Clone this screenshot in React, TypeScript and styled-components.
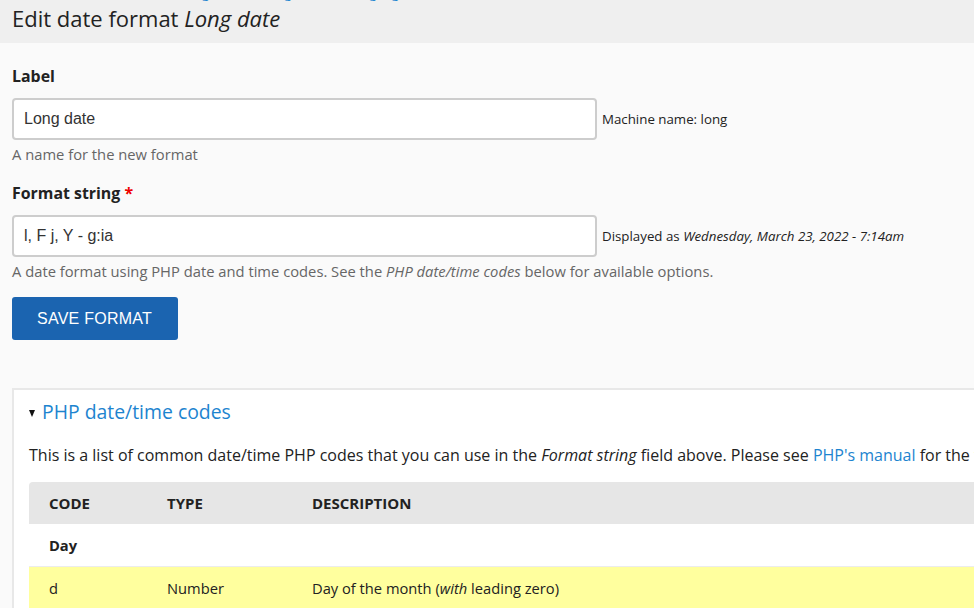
import styled, { createGlobalStyle } from 'styled-components';

const GlobalStyle = createGlobalStyle`
  html, body {
    margin: 0;
    padding: 0;
    overflow: hidden;
    background: #fafafa;
  }
  body {
    font-family: 'Open Sans', 'Noto Sans', sans-serif;
    color: #222;
  }
`;

const Header = styled.header`
  display: flow-root;
  background: #efefef;
  height: 43px;
  padding: 0 12px;
  box-sizing: border-box;
`;

const Breadcrumb = styled.nav`
  font-size: 13px;
  line-height: 16px;
  margin-top: -15px;
  white-space: nowrap;
  a {
    color: #1d84cf;
    text-decoration: none;
  }
  span {
    color: #666;
    margin: 0 6px;
  }
`;

const Title = styled.h1`
  margin: 3px 0 0;
  font-size: 22px;
  line-height: 29px;
  font-weight: 400;
  em {
    font-style: italic;
  }
`;

const Main = styled.main`
  padding: 0 12px;
`;

const Form = styled.form`
  display: flex;
  flex-direction: column;
  align-items: flex-start;
  padding-top: 23px;
`;

const FieldLabel = styled.label`
  display: block;
  font-size: 15.9px;
  line-height: 20px;
  font-weight: 700;
  margin-bottom: 12px;
  .req {
    color: #e00;
  }
`;

const Field = styled.div<{ $gap?: number }>`
  margin-top: ${(p) => p.$gap ?? 0}px;
`;

const InputRow = styled.div`
  display: flex;
  align-items: center;
  gap: 5px;
`;

const TextInput = styled.input`
  width: 585px;
  height: 42px;
  box-sizing: border-box;
  border: 2px solid #cdcdcd;
  border-radius: 4px;
  background: #fff;
  padding: 0 10px;
  font-family: 'Liberation Sans', Arial, sans-serif;
  font-size: 16px;
  color: #333;
  outline: none;
`;

const Suffix = styled.span`
  font-size: 13.3px;
  color: #222;
  em {
    font-style: italic;
  }
`;

const Hint = styled.div`
  margin-top: 4px;
  font-size: 14.75px;
  line-height: 21px;
  color: #666;
  em {
    font-style: italic;
  }
`;

const PrimaryButton = styled.button`
  margin-top: 15px;
  height: 43px;
  padding: 0 26px 0 25px;
  border: 0;
  border-radius: 3px;
  background: #1b64b0;
  color: #fff;
  font-family: 'Liberation Sans', Arial, sans-serif;
  font-size: 16px;
  letter-spacing: 0.25px;
  cursor: pointer;
`;

const Details = styled.section`
  margin-top: 48px;
  width: 1400px;
  background: #fff;
  border: 2px solid #e8e8e8;
  border-right: 0;
  border-bottom: 0;
  padding: 0 15px;
`;

const Summary = styled.div`
  display: flex;
  align-items: center;
  gap: 7px;
  padding-top: 8px;
  font-size: 19.4px;
  line-height: 28px;
  color: #1d84cf;
`;

const Caret = styled.span`
  width: 0;
  height: 0;
  border-left: 3.5px solid transparent;
  border-right: 3.5px solid transparent;
  border-top: 7px solid #111;
  margin-top: 2px;
`;

const Intro = styled.p`
  margin: 17px 0 15px;
  font-size: 16px;
  line-height: 24px;
  white-space: nowrap;
  a {
    color: #1d84cf;
    text-decoration: none;
  }
`;

const Table = styled.table`
  border-collapse: separate;
  border-spacing: 0;
  width: 100%;
  font-size: 14.7px;
`;

const Th = styled.th<{ $w?: number }>`
  background: #e6e6e6;
  text-align: left;
  text-transform: uppercase;
  font-size: 15px;
  font-weight: 700;
  line-height: 20px;
  padding: 11px 20px;
  width: ${(p) => (p.$w ? `${p.$w - 40}px` : 'auto')};
  &:first-child {
    border-top-left-radius: 4px;
  }
`;

const Td = styled.td<{ $bold?: boolean }>`
  line-height: 20px;
  padding: 11px 20px;
  font-weight: ${(p) => (p.$bold ? 700 : 400)};
  border-bottom: 1px solid #ececec;
`;

const Tr = styled.tr<{ $hl?: boolean }>`
  background: ${(p) => (p.$hl ? '#ffff9e' : '#fff')};
`;

export default function App() {
  return (
    <>
      <GlobalStyle />
      <Header>
        <Breadcrumb>
          <a href="#">Home</a>
          <span>›</span>
          <a href="#">Administration</a>
          <span>›</span>
          <a href="#">Configuration</a>
          <span>›</span>
          <a href="#">Regional and language</a>
          <span>›</span>
          <a href="#">Date and time formats</a>
        </Breadcrumb>
        <Title>
          Edit date format <em>Long date</em>
        </Title>
      </Header>
      <Main>
        <Form onSubmit={(e) => e.preventDefault()}>
          <Field>
            <FieldLabel htmlFor="label">Label</FieldLabel>
            <InputRow>
              <TextInput id="label" defaultValue="Long date" />
              <Suffix>Machine name: long</Suffix>
            </InputRow>
            <Hint>A name for the new format</Hint>
          </Field>
          <Field $gap={18}>
            <FieldLabel htmlFor="pattern">
              Format string <span className="req">*</span>
            </FieldLabel>
            <InputRow>
              <TextInput id="pattern" defaultValue="l, F j, Y - g:ia" />
              <Suffix>
                Displayed as <em>Wednesday, March 23, 2022 - 7:14am</em>
              </Suffix>
            </InputRow>
            <Hint>
              A date format using PHP date and time codes. See the <em>PHP date/time codes</em> below for available
              options.
            </Hint>
          </Field>
          <PrimaryButton type="submit">SAVE FORMAT</PrimaryButton>
        </Form>
        <Details>
          <Summary>
            <Caret />
            PHP date/time codes
          </Summary>
          <Intro>
            This is a list of common date/time PHP codes that you can use in the <em>Format string</em> field above.
            Please see <a href="#">PHP's manual</a> for the full list of available options.
          </Intro>
          <Table>
            <thead>
              <tr>
                <Th $w={118}>Code</Th>
                <Th $w={145}>Type</Th>
                <Th>Description</Th>
              </tr>
            </thead>
            <tbody>
              <Tr>
                <Td $bold colSpan={3}>
                  Day
                </Td>
              </Tr>
              <Tr $hl>
                <Td>d</Td>
                <Td>Number</Td>
                <Td>
                  Day of the month (<em>with</em> leading zero)
                </Td>
              </Tr>
              <Tr $hl>
                <Td>j</Td>
                <Td>Number</Td>
                <Td>
                  Day of the month (<em>without</em> leading zero)
                </Td>
              </Tr>
            </tbody>
          </Table>
        </Details>
      </Main>
    </>
  );
}
